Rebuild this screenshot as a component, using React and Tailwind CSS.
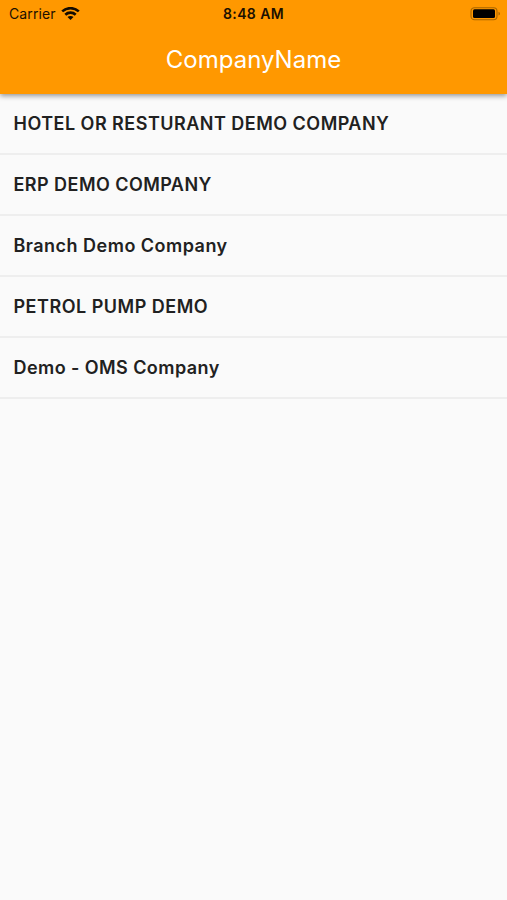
import React from 'react';

const companies = [
  { id: 1, name: 'HOTEL OR RESTURANT DEMO COMPANY', spacing: 'tracking-[0.48px]' },
  { id: 2, name: 'ERP DEMO COMPANY', spacing: 'tracking-[0.45px]' },
  { id: 3, name: 'Branch Demo Company', spacing: 'tracking-[0.48px]' },
  { id: 4, name: 'PETROL PUMP DEMO', spacing: 'tracking-[0.5px]' },
  { id: 5, name: 'Demo - OMS Company', spacing: 'tracking-[0.43px]' },
];

const WifiIcon = () => (
  <svg width="19" height="14" viewBox="0 0 19 14" fill="none" stroke="#140c00" strokeWidth="2.6">
    <path d="M1.2 4.4C5.8 0.1 13.2 0.1 17.8 4.4" />
    <path d="M4.3 7.7C7.2 4.9 11.8 4.9 14.7 7.7" />
    <path d="M9.5 13L6.5 10C8.1 8.5 10.9 8.5 12.5 10Z" fill="#140c00" stroke="none" />
  </svg>
);

const BatteryIcon = () => (
  <svg width="31" height="14" viewBox="0 0 31 14" fill="none">
    <rect x="1" y="0.7" width="26" height="12" rx="3.5" stroke="#a86600" strokeWidth="1.1" />
    <rect x="3" y="2.3" width="22" height="8.8" rx="1.5" fill="#000" />
    <path d="M28.5 4.8C30.5 5.5 30.5 7.9 28.5 8.6Z" fill="#a86600" />
  </svg>
);

const App = () => {
  return (
    <div className="h-screen overflow-hidden bg-[#fafafa] font-['Inter','Liberation_Sans',sans-serif]">
      <header className="relative h-[94px] bg-[#ff9800] shadow-[0_2px_5px_rgba(0,0,0,0.4)]">
        <div className="grid h-[27px] grid-cols-3 items-center pl-[9px] pr-[6px] text-[#1b1000]">
          <div className="flex items-center gap-[5px] text-[14px] tracking-[0.1px]">
            <span>Carrier</span>
            <WifiIcon />
          </div>
          <span className="pr-[3px] text-center text-[14px] font-semibold tracking-[0.4px]">8:48 AM</span>
          <div className="flex justify-end">
            <BatteryIcon />
          </div>
        </div>
        <h1 className="flex h-[65px] items-center justify-center text-[24px] text-white">
          CompanyName
        </h1>
      </header>

      <ul>
        {companies.map((company) => (
          <li
            key={company.id}
            className="flex h-[61px] items-center border-b-2 border-[#eeeeee] pl-[13.5px] text-[18px] font-semibold text-[#212121]"
          >
            <span className={company.spacing}>{company.name}</span>
          </li>
        ))}
      </ul>
    </div>
  );
};

export default App;
